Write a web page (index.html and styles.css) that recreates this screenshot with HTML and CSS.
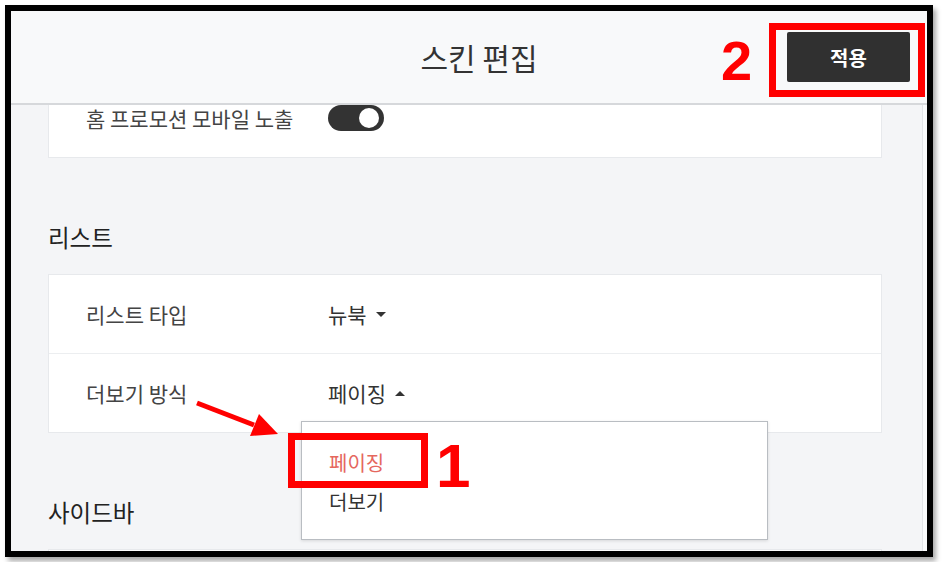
FILE: index.html
```html
<!DOCTYPE html>
<html>
<head>
    <title>스킨 편집</title>
    <meta name="viewport" content="width=device-width, initial-scale=1.0">
    <link rel="stylesheet" href="styles.css">
</head>
<body>
    <div class="frame">
        <header class="topbar">
            <div></div>
            <h1 class="title">스킨 편집</h1>
            <div class="actions">
                <button class="apply-btn">적용</button>
            </div>
        </header>
        <div class="body">
            <div class="scroll">
                <div class="sections">
                    <!-- top of this card is scrolled under the header -->
                    <div class="card scrolled">
                        <div class="row">
                            <span class="label">홈 프로모션 모바일 노출</span>
                            <span class="toggle"><span class="knob"></span></span>
                        </div>
                    </div>

                    <h2 class="section-title">리스트</h2>
                    <div class="card">
                        <div class="row">
                            <span class="label">리스트 타입</span>
                            <span class="value">뉴북 <i class="caret down"></i></span>
                        </div>
                        <div class="row">
                            <span class="label">더보기 방식</span>
                            <span class="value">페이징 <i class="caret up"></i>
                                <ul class="dropdown">
                                    <li class="selected">페이징</li>
                                    <li>더보기</li>
                                </ul>
                            </span>
                        </div>
                    </div>

                    <h2 class="section-title">사이드바</h2>
                    <div class="card">
                        <div class="row"></div>
                    </div>
                </div>
            </div>
            <div class="scrollbar"></div>
        </div>

        <!-- annotations drawn over the screenshot -->
        <div class="mark-box mark-apply"></div>
        <span class="mark-num num-2">2</span>
        <div class="mark-box mark-item"></div>
        <span class="mark-num num-1">1</span>
        <svg class="mark-arrow" width="95" height="50" viewBox="0 0 95 50">
            <line x1="7" y1="8" x2="64" y2="30" stroke="#f00" stroke-width="5"/>
            <polygon points="88,39 60,41 69,19" fill="#f00"/>
        </svg>
    </div>
</body>
</html>
```

FILE: styles.css
```css
body {
    margin: 0;
    background-color: #fff;
    font-family: "Noto Sans CJK KR", "Noto Sans", sans-serif;
    color: #333;
}
.frame {
    position: relative;
    margin: 5px;
    width: 928px;
    height: 552px;
    box-sizing: border-box;
    border: 6px solid #000;
    box-shadow: 3px 4px 5px rgba(0, 0, 0, 0.35);
    display: flex;
    flex-direction: column;
    overflow: hidden;
}
.topbar {
    flex-shrink: 0;
    height: 94px;
    box-sizing: border-box;
    display: grid;
    grid-template-columns: 1fr auto 1fr;
    align-items: center;
    padding: 0 17px 0 37px;
    background-color: #f8f9fa;
    border-bottom: 2px solid #d6d8db;
}
.title {
    margin: 0;
    font-size: 30px;
    font-weight: 400;
    line-height: 1;
    color: #333;
}
.actions {
    display: flex;
    justify-content: flex-end;
}
.apply-btn {
    width: 123px;
    height: 50px;
    border: none;
    border-radius: 2px;
    background-color: #303030;
    color: #fff;
    font-family: inherit;
    font-size: 20px;
    font-weight: 700;
    cursor: pointer;
}
.body {
    flex: 1;
    min-height: 0;
    display: flex;
    background-color: #f4f5f7;
}
.scroll {
    flex: 1;
}
.sections {
    padding: 0 40px 0 37px;
}
.scrollbar {
    width: 4px;
    border-left: 1px solid #e2e4e7;
    background-color: #fafbfc;
}
.card {
    background-color: #fff;
    border: 1px solid #e7e9ec;
}
.card.scrolled {
    border-top: none;
}
.row {
    display: grid;
    grid-template-columns: 242px 1fr;
    align-items: center;
    height: 78px;
    padding-left: 37px;
    font-size: 21px;
    line-height: 24px;
}
.scrolled .row {
    height: 26px;
    padding-bottom: 26px;
}
.row + .row {
    border-top: 1px solid #eceef0;
}
.label {
    color: #444;
}
.value {
    position: relative;
    display: flex;
    align-items: center;
    gap: 9px;
    color: #333;
}
.caret {
    width: 0;
    height: 0;
    border-left: 5px solid transparent;
    border-right: 5px solid transparent;
}
.caret.down {
    border-top: 5px solid #333;
}
.caret.up {
    border-bottom: 5px solid #333;
}
.toggle {
    position: relative;
    display: block;
    width: 56px;
    height: 26px;
    border-radius: 13px;
    background-color: #333;
}
.knob {
    position: absolute;
    top: 3px;
    right: 5px;
    width: 20px;
    height: 20px;
    border-radius: 50%;
    background-color: #fff;
}
.section-title {
    margin: 64px 0 22px;
    font-size: 23.5px;
    font-weight: 400;
    line-height: 30px;
    color: #222;
}
.dropdown {
    position: absolute;
    top: 40px;
    left: -27px;
    width: 467px;
    height: 119px;
    box-sizing: border-box;
    margin: 0;
    padding: 21px 0 0 27px;
    list-style: none;
    background-color: #fff;
    border: 1px solid #b9bdc2;
    box-shadow: 0 1px 3px rgba(0, 0, 0, 0.12);
    font-size: 20px;
    line-height: 39px;
    color: #333;
}
.dropdown .selected {
    color: #e5675e;
}

/* red annotation marks */
.mark-box {
    position: absolute;
    box-sizing: border-box;
    border: 7px solid #f00;
}
.mark-apply {
    left: 758px;
    top: 12px;
    width: 156px;
    height: 74px;
}
.mark-item {
    left: 277px;
    top: 422px;
    width: 140px;
    height: 55px;
}
.mark-num {
    position: absolute;
    font-family: "Liberation Sans", Arial, sans-serif;
    font-weight: 700;
    color: #f00;
}
.num-2 {
    left: 710px;
    top: 22px;
    font-size: 56px;
    line-height: 56px;
}
.num-1 {
    left: 425px;
    top: 424px;
    font-size: 62px;
    line-height: 62px;
}
.mark-arrow {
    position: absolute;
    left: 179px;
    top: 384px;
}
```
